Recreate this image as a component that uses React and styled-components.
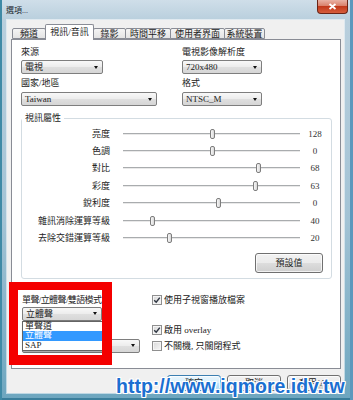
import React from 'react';
import styled, { createGlobalStyle } from 'styled-components';

const FONT = `"Liberation Serif", "Noto Sans CJK TC", serif`;

const GlobalStyle = createGlobalStyle`
  html, body {
    margin: 0;
    padding: 0;
  }
  body {
    width: 353px;
    height: 400px;
    overflow: hidden;
    background: #fff;
    font-family: ${FONT};
  }
  * {
    box-sizing: border-box;
  }
`;

const Window = styled.div`
  position: relative;
  width: 353px;
  height: 400px;
  display: flex;
  flex-direction: column;
  padding: 0 9px 7px 7px;
  overflow: hidden;
  background: linear-gradient(180deg, #cfdee9 0, #b9cfdd 20px, #a3c3d5 55%, #6da6bf 100%);
  box-shadow: inset 2px 0 0 #3f8aa6, inset -3px 0 0 #5c98bd, inset 0 -2px 0 #3a7e9b;
`;

const TitleBar = styled.div`
  flex: none;
  height: 20px;
  display: flex;
  align-items: flex-start;
  justify-content: space-between;
`;

const TitleText = styled.span`
  margin: 6px 0 0 -1px;
  font: 8px/10px ${FONT};
  color: #1e2a33;
`;

const CloseButton = styled.div`
  width: 31px;
  height: 14px;
  margin-right: -4px;
  border: 1px solid #6a2416;
  border-top: none;
  border-radius: 0 0 4px 4px;
  background: linear-gradient(180deg, #e9b2a4 0, #d9806a 45%, #c2391b 50%, #d65d3c 100%);
  display: flex;
  align-items: center;
  justify-content: center;
`;

const Client = styled.div`
  flex: 1;
  display: flex;
  flex-direction: column;
  padding: 4px 3px 2px 4px;
  background: #f0f0f0;
  box-shadow: 0 0 0 1px rgba(255, 255, 255, 0.55);
`;

const TabStrip = styled.div`
  position: relative;
  z-index: 1;
  flex: none;
  height: 15px;
  display: flex;
  align-items: flex-end;
  padding-left: 1px;
`;

const Tab = styled.div`
  width: ${(p) => p.$w}px;
  height: ${(p) => (p.$active ? 16 : 11)}px;
  margin-left: -1px;
  margin-bottom: ${(p) => (p.$active ? -1 : 0)}px;
  border: 1px solid #898c95;
  border-bottom: ${(p) => (p.$active ? 'none' : '1px solid #898c95')};
  border-radius: 2px 2px 0 0;
  background: ${(p) => (p.$active ? '#fff' : 'linear-gradient(180deg, #f4f4f4, #e4e4e4)')};
  display: flex;
  align-items: ${(p) => (p.$active ? 'flex-start' : 'center')};
  padding-top: ${(p) => (p.$active ? 2 : 0)}px;
  justify-content: center;
  font: 9px/10px ${FONT};
  color: #222;
  white-space: nowrap;
  &:first-child {
    margin-left: 0;
  }
`;

const Panel = styled.div`
  flex: none;
  height: 330px;
  border: 1px solid #898c95;
  background: #fff;
  padding: 6px 0 0 9px;
  display: flex;
  flex-direction: column;
`;

const TopFields = styled.div`
  display: grid;
  grid-template-columns: 161px 1fr;
`;

const Column = styled.div`
  display: flex;
  flex-direction: column;
  align-items: flex-start;
`;

const Label = styled.div`
  font: 9px/12px ${FONT};
  color: #222;
  margin-top: ${(p) => p.$top || 0}px;
  margin-bottom: ${(p) => (p.$bottom == null ? 2 : p.$bottom)}px;
  letter-spacing: ${(p) => p.$tight || 0}px;
  white-space: nowrap;
`;

const Select = styled.div`
  width: ${(p) => p.$w}px;
  height: 14px;
  border: 1px solid #7e7e7e;
  border-radius: 2px;
  background: linear-gradient(180deg, #f8f8f8, #ececec 50%, #dfdfdf 51%, #d6d6d6);
  display: flex;
  align-items: center;
  justify-content: space-between;
  padding: 0 4px 0 3px;
  font: 9px/12px ${FONT};
  color: #222;
  white-space: nowrap;
`;

const Arrow = styled.span`
  width: 0;
  height: 0;
  border-style: solid;
  border-width: 3px 2.5px 0;
  border-color: #111 transparent transparent;
`;

const GroupBox = styled.fieldset`
  width: 311px;
  min-width: 0;
  margin: 6px 0 0;
  padding: 1px 8px 5px 0;
  border: 1px solid #d3dce2;
  border-radius: 3px;
`;

const Legend = styled.legend`
  padding: 0 3px;
  margin-left: 0;
  font: 9px/12px ${FONT};
  color: #222;
`;

const SliderGrid = styled.div`
  display: grid;
  grid-template-columns: 101px 177px 27px;
  grid-auto-rows: 17.4px;
  align-items: center;
`;

const SliderLabel = styled.div`
  padding-right: 13px;
  text-align: right;
  font: 9px/12px ${FONT};
  color: #222;
  white-space: nowrap;
`;

const Track = styled.div`
  position: relative;
  height: 2px;
  border-top: 1px solid #a9acae;
  border-bottom: 1px solid #e9e9e9;
`;

const Thumb = styled.div`
  position: absolute;
  top: -5px;
  width: 5px;
  height: 10px;
  margin-left: -2.5px;
  border: 1px solid #7d7d7d;
  border-radius: 2px;
  background: linear-gradient(90deg, #f7f7f7, #d8d8d8);
`;

const SliderValue = styled.div`
  padding-left: 3px;
  text-align: center;
  font: 9px/12px ${FONT};
  color: #333;
`;

const ButtonRow = styled.div`
  display: flex;
  justify-content: flex-end;
  gap: 6px;
  margin-top: ${(p) => p.$top || 0}px;
`;

const Button = styled.div`
  width: ${(p) => p.$w}px;
  height: ${(p) => p.$h}px;
  border: 1px solid ${(p) => (p.$primary ? '#3c7fb1' : '#707070')};
  border-radius: 3px;
  background: ${(p) =>
    p.$primary
      ? 'linear-gradient(180deg, #eaf6fd, #d9f0fc 50%, #bee6fd 51%, #a7d9f5)'
      : 'linear-gradient(180deg, #f2f2f2, #ebebeb 50%, #dddddd 51%, #cfcfcf)'};
  box-shadow: inset 0 0 0 1px rgba(255, 255, 255, 0.7);
  display: flex;
  align-items: center;
  justify-content: center;
  font: 9px/12px ${FONT};
  color: #222;
`;

const BottomSection = styled.div`
  display: flex;
  margin-top: 15px;
`;

const LeftCol = styled.div`
  width: 118px;
  margin-left: 1px;
  display: flex;
  flex-direction: column;
  align-items: flex-start;
`;

const Combo = styled.div`
  position: relative;
`;

const DropList = styled.div`
  position: absolute;
  z-index: 2;
  top: 100%;
  left: 0;
  width: 81px;
  border: 1px solid #646464;
  background: #fff;
  box-shadow: 1px 1px 2px rgba(0, 0, 0, 0.3);
`;

const DropItem = styled.div`
  height: 9.5px;
  padding-left: 2px;
  font: 9px/9.5px ${FONT};
  color: ${(p) => (p.$sel ? '#fff' : '#222')};
  background: ${(p) => (p.$sel ? '#3399ff' : 'transparent')};
  white-space: nowrap;
`;

const RightCol = styled.div`
  margin-left: 12px;
  display: flex;
  flex-direction: column;
`;

const CheckRow = styled.div`
  display: flex;
  align-items: center;
  gap: 2px;
  height: 12px;
  margin-top: ${(p) => p.$top || 0}px;
  font: 9px/12px ${FONT};
  color: #222;
  white-space: nowrap;
`;

const Box = styled.span`
  width: 10px;
  height: 10px;
  flex: none;
  border: 1px solid #8f8f8f;
  background: linear-gradient(135deg, #d8d8d8, #f7f7f7);
  box-shadow: inset 0 0 0 1px #f4f4f4;
  display: flex;
  align-items: center;
  justify-content: center;
`;

const RedMark = styled.div`
  position: absolute;
  z-index: 4;
  left: 9px;
  top: 282px;
  width: 103px;
  height: 83px;
  border-style: solid;
  border-color: #f40000;
  border-width: 8px 10px 10px 9px;
`;

const Watermark = styled.div`
  position: absolute;
  z-index: 5;
  left: 116px;
  top: 376px;
  font: bold 19.5px/20px "Liberation Sans", Arial, sans-serif;
  color: #1b6fd1;
  white-space: nowrap;
  text-shadow: 1px 0 #fff, -1px 0 #fff, 0 1px #fff, 0 -1px #fff, 1px 1px #fff, -1px -1px #fff,
    1px -1px #fff, -1px 1px #fff;
`;

const tabs = [
  { name: '頻道', w: 34 },
  { name: '視訊/音訊', w: 49, active: true },
  { name: '錄影', w: 33 },
  { name: '時間平移', w: 46 },
  { name: '使用者界面', w: 55 },
  { name: '系統裝置', w: 41 }
];

// thumb x taken as share of the 177px track
const sliders = [
  { name: '亮度', value: '128', at: 89 },
  { name: '色調', value: '0', at: 89 },
  { name: '對比', value: '68', at: 135 },
  { name: '彩度', value: '63', at: 132 },
  { name: '銳利度', value: '0', at: 95 },
  { name: '雜訊消除運算等級', value: '40', at: 29 },
  { name: '去除交錯運算等級', value: '20', at: 46 }
];

function Check({ checked, children, top }) {
  return (
    <CheckRow $top={top}>
      <Box>
        {checked && (
          <svg width="8" height="8" viewBox="0 0 8 8">
            <path d="M1.2 4.2 L3.2 6.2 L6.8 1.6" stroke="#2f3642" strokeWidth="1.5" fill="none" />
          </svg>
        )}
      </Box>
      <span>{children}</span>
    </CheckRow>
  );
}

export default function App() {
  return (
    <>
      <GlobalStyle />
      <Window>
        <TitleBar>
          <TitleText>選項...</TitleText>
          <CloseButton>
            <svg width="9" height="7" viewBox="0 0 9 7">
              <path d="M1.5 1 L7.5 6 M7.5 1 L1.5 6" stroke="#fff" strokeWidth="1.8" />
            </svg>
          </CloseButton>
        </TitleBar>
        <Client>
          <TabStrip>
            {tabs.map((t) => (
              <Tab key={t.name} $w={t.w} $active={t.active}>
                {t.name}
              </Tab>
            ))}
          </TabStrip>
          <Panel>
            <TopFields>
              <Column>
                <Label>來源</Label>
                <Select $w={82}>
                  電視
                  <Arrow />
                </Select>
                <Label $top={3} $bottom={3}>國家/地區</Label>
                <Select $w={136}>
                  Taiwan
                  <Arrow />
                </Select>
              </Column>
              <Column>
                <Label>電視影像解析度</Label>
                <Select $w={80}>
                  720x480
                  <Arrow />
                </Select>
                <Label $top={3} $bottom={3}>格式</Label>
                <Select $w={80}>
                  NTSC_M
                  <Arrow />
                </Select>
              </Column>
            </TopFields>

            <GroupBox>
              <Legend>視訊屬性</Legend>
              <SliderGrid>
                {sliders.map((s) => (
                  <React.Fragment key={s.name}>
                    <SliderLabel>{s.name}</SliderLabel>
                    <Track>
                      <Thumb style={{ left: s.at }} />
                    </Track>
                    <SliderValue>{s.value}</SliderValue>
                  </React.Fragment>
                ))}
              </SliderGrid>
              <ButtonRow $top={6}>
                <Button $w={68} $h={20}>預設值</Button>
              </ButtonRow>
            </GroupBox>

            <BottomSection>
              <LeftCol>
                <Label $bottom={1} $tight={-0.6}>
                  單聲/立體聲/雙語模式
                </Label>
                <Combo>
                  <Select $w={80}>
                    立體聲
                    <Arrow />
                  </Select>
                  <DropList>
                    <DropItem>單聲道</DropItem>
                    <DropItem $sel>立體聲</DropItem>
                    <DropItem>SAP</DropItem>
                  </DropList>
                </Combo>
                <Label $top={4}>音訊</Label>
                <Select $w={118}>
                  <span />
                  <Arrow />
                </Select>
              </LeftCol>
              <RightCol>
                <Check checked>使用子視窗播放檔案</Check>
                <Check checked top={18.5}>
                  啟用 overlay
                </Check>
                <Check top={4}>不關機, 只關閉程式</Check>
              </RightCol>
            </BottomSection>
          </Panel>
          <ButtonRow $top={6}>
            <Button $w={54} $h={16} $primary>
              確定
            </Button>
            <Button $w={54} $h={16}>
              取消
            </Button>
            <Button $w={54} $h={16}>
              套用(A)
            </Button>
          </ButtonRow>
        </Client>
        <RedMark />
        <Watermark>http://www.iqmore.idv.tw</Watermark>
      </Window>
    </>
  );
}
